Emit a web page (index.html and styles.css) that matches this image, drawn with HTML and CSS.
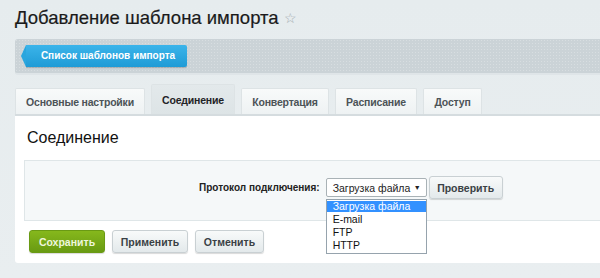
FILE: index.html
```html
<!DOCTYPE html>
<html lang="ru">
<head>
    <meta charset="UTF-8">
    <title>Добавление шаблона импорта</title>
    <link rel="stylesheet" href="styles.css">
</head>
<body>
    <div class="page">
        <h1 class="title">Добавление шаблона импорта <span class="star">&#9734;</span></h1>

        <div class="toolbar">
            <a class="back-btn" href="#">Список шаблонов импорта</a>
        </div>

        <div class="tabs">
            <div class="tab tab-main">Основные настройки</div>
            <div class="tab tab-conn active">Соединение</div>
            <div class="tab tab-conv">Конвертация</div>
            <div class="tab tab-sched">Расписание</div>
            <div class="tab tab-access">Доступ</div>
        </div>

        <div class="panel">
            <h2 class="panel-title">Соединение</h2>
            <div class="form-box">
                <div class="form-row">
                    <label class="form-label">Протокол подключения:</label>
                    <div class="select-wrap">
                        <div class="select">Загрузка файла <span class="arrow">&#9660;</span></div>
                        <ul class="options">
                            <li class="selected">Загрузка файла</li>
                            <li>E-mail</li>
                            <li>FTP</li>
                            <li>HTTP</li>
                        </ul>
                    </div>
                    <button class="btn btn-check">Проверить</button>
                </div>
            </div>
            <div class="actions">
                <button class="btn btn-save">Сохранить</button>
                <button class="btn btn-apply">Применить</button>
                <button class="btn btn-cancel">Отменить</button>
            </div>
        </div>
    </div>
</body>
</html>
```

FILE: styles.css
```css
body {
    margin: 0;
    background: linear-gradient(#e6ecee, #e9eef0);
    font-family: "Liberation Sans", Arial, sans-serif;
    color: #333;
    height: 278px;
    overflow: hidden;
}
.page {
    padding-left: 15px;
}
.title {
    margin: 0;
    height: 39px;
    padding-top: 7px;
    box-sizing: border-box;
    font-size: 18.5px;
    font-weight: normal;
    color: #1a1a1a;
    -webkit-text-stroke: 0.2px #1a1a1a;
}
.star {
    font-size: 14px;
    color: #a3abb0;
    -webkit-text-stroke: 0;
    margin-left: 0;
    vertical-align: 1px;
}
.toolbar {
    height: 36px;
    background-color: #cbd3d7;
    background-image: radial-gradient(rgba(255, 255, 255, 0.25) 1px, transparent 1px);
    background-size: 3px 3px;
    border-bottom: 2px solid #dfe5e8;
    border-radius: 3px 0 0 3px;
    padding: 6px 0 0 7px;
    box-sizing: border-box;
}
.back-btn {
    display: inline-block;
    position: relative;
    height: 22px;
    line-height: 22px;
    width: 161px;
    box-sizing: border-box;
    text-align: center;
    padding-left: 3px;
    margin-left: 4px;
    background: linear-gradient(#3bb4ea, #1f9bd6);
    color: #fff;
    font-size: 10px;
    font-weight: bold;
    text-decoration: none;
    border-radius: 0 2px 2px 0;
    box-shadow: 0 1px 1px rgba(0, 0, 0, 0.2);
}
.back-btn:before {
    content: "";
    position: absolute;
    left: -5px;
    top: 0;
    border-top: 11px solid transparent;
    border-bottom: 11px solid transparent;
    border-right: 5px solid #2aa6de;
}
.tabs {
    display: flex;
    align-items: flex-end;
    gap: 6px;
    margin-top: 8px;
    height: 31px;
}
.tab {
    height: 26px;
    line-height: 27px;
    text-align: center;
    box-sizing: border-box;
    background: linear-gradient(#f8fafa, #eef2f3);
    border: 1px solid #dde3e5;
    border-bottom: none;
    border-radius: 2px 2px 0 0;
    font-size: 10.5px;
    font-weight: bold;
    letter-spacing: -0.2px;
    color: #4c5357;
}
.tab-main { width: 130px; }
.tab-conn { width: 84px; }
.tab-conv { width: 88px; }
.tab-sched { width: 82px; }
.tab-access { width: 59px; }
.tab.active {
    height: 30px;
    line-height: 31px;
    background: linear-gradient(#e3e9eb, #dde4e6);
    color: #1f2326;
}
.panel {
    background: #fff;
    border-top: 2px solid #d5dcdf;
    padding: 10px 0 10px 9px;
    height: 149px;
    box-sizing: border-box;
    border-radius: 0 0 0 3px;
}
.panel-title {
    margin: 0 0 11px 3px;
    font-size: 16px;
    font-weight: normal;
    color: #111;
    height: 23px;
    line-height: 23px;
}
.form-box {
    height: 61px;
    background: #f5f8f9;
    border: 1px solid #dfe6e8;
    border-right: none;
    box-sizing: border-box;
}
.form-row {
    display: flex;
    align-items: center;
    padding: 15px 0 0 174px;
}
.form-label {
    font-size: 10px;
    font-weight: bold;
    color: #222;
    margin-right: 6px;
}
.select-wrap {
    position: relative;
}
.select {
    width: 101px;
    height: 19px;
    line-height: 18px;
    box-sizing: border-box;
    border: 1px solid #a9b2b6;
    border-radius: 2px;
    background: #fff;
    font-size: 10.5px;
    padding-left: 6px;
    color: #222;
}
.arrow {
    font-size: 7px;
    position: absolute;
    right: 6px;
    top: 6px;
    line-height: 7px;
}
.options {
    position: absolute;
    top: 21px;
    left: 0;
    width: 101px;
    margin: 0;
    padding: 1px 0 1px;
    list-style: none;
    background: #fff;
    border: 1px solid #96a3ad;
    box-sizing: border-box;
    font-size: 10.5px;
    color: #111;
    z-index: 2;
}
.options li {
    height: 13px;
    line-height: 13px;
    padding-left: 6px;
}
.options li.selected {
    background: #3391ff;
    color: #fff;
    height: 11px;
    line-height: 11px;
    margin-bottom: 1px;
}
.btn {
    height: 23px;
    padding: 0;
    border: 1px solid #c9d0d3;
    border-radius: 3px;
    background: linear-gradient(#f8fafa, #e3e9eb);
    box-shadow: 0 1px 1px rgba(0, 0, 0, 0.15);
    font-family: "Liberation Sans", Arial, sans-serif;
    font-size: 10.5px;
    font-weight: bold;
    color: #3a4145;
    cursor: pointer;
}
.btn-check {
    width: 74px;
    margin-left: 2px;
}
.btn-save { width: 76px; }
.btn-apply { width: 76px; }
.btn-cancel { width: 69px; }
.actions {
    display: flex;
    gap: 7px;
    margin: 9px 0 0 5px;
}
.btn-save {
    background: linear-gradient(#86b81c, #689a12);
    border-color: #6a9a14;
    color: #eef6dd;
}
```
